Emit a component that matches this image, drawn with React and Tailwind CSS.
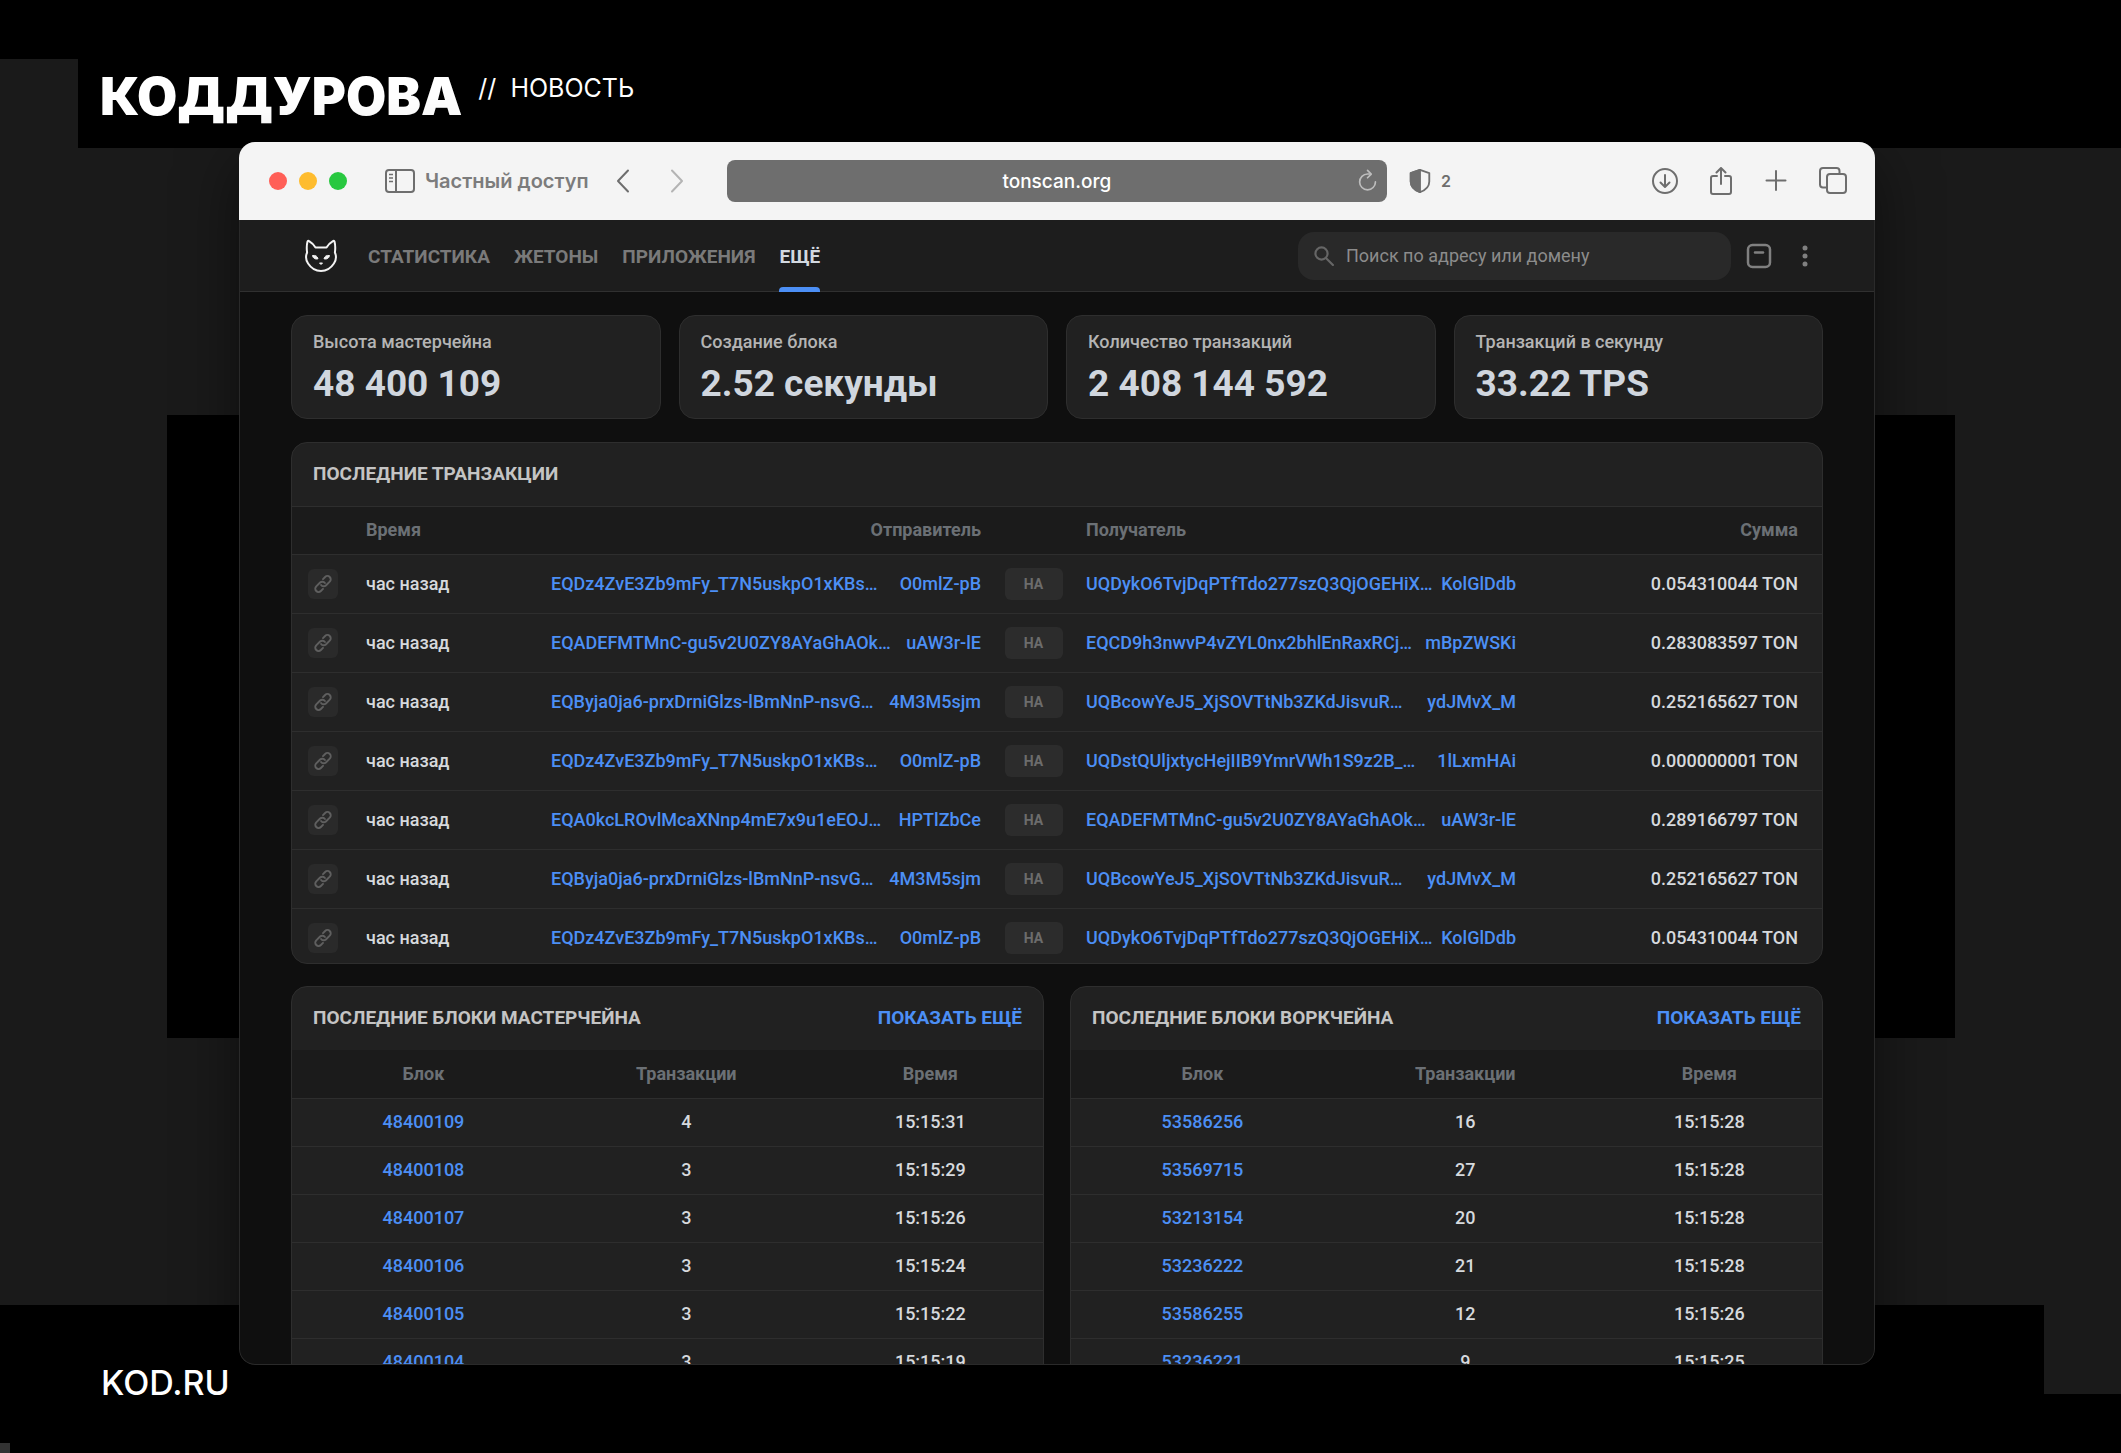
import React from 'react';

const stats = [
  { label: 'Высота мастерчейна', value: '48 400 109' },
  { label: 'Создание блока', value: '2.52 секунды' },
  { label: 'Количество транзакций', value: '2 408 144 592' },
  { label: 'Транзакций в секунду', value: '33.22 TPS' },
];

const transactions = [
  { from: ['EQDz4ZvE3Zb9mFy_T7N5uskpO1xKBs…', 'O0mlZ-pB'], to: ['UQDykO6TvjDqPTfTdo277szQ3QjOGEHiX…', 'KolGlDdb'], amount: '0.054310044 TON' },
  { from: ['EQADEFMTMnC-gu5v2U0ZY8AYaGhAOk…', 'uAW3r-lE'], to: ['EQCD9h3nwvP4vZYL0nx2bhlEnRaxRCj…', 'mBpZWSKi'], amount: '0.283083597 TON' },
  { from: ['EQByja0ja6-prxDrniGlzs-lBmNnP-nsvG…', '4M3M5sjm'], to: ['UQBcowYeJ5_XjSOVTtNb3ZKdJisvuR…', 'ydJMvX_M'], amount: '0.252165627 TON' },
  { from: ['EQDz4ZvE3Zb9mFy_T7N5uskpO1xKBs…', 'O0mlZ-pB'], to: ['UQDstQUljxtycHejIIB9YmrVWh1S9z2B_…', '1lLxmHAi'], amount: '0.000000001 TON' },
  { from: ['EQA0kcLROvlMcaXNnp4mE7x9u1eEOJ…', 'HPTlZbCe'], to: ['EQADEFMTMnC-gu5v2U0ZY8AYaGhAOk…', 'uAW3r-lE'], amount: '0.289166797 TON' },
  { from: ['EQByja0ja6-prxDrniGlzs-lBmNnP-nsvG…', '4M3M5sjm'], to: ['UQBcowYeJ5_XjSOVTtNb3ZKdJisvuR…', 'ydJMvX_M'], amount: '0.252165627 TON' },
  { from: ['EQDz4ZvE3Zb9mFy_T7N5uskpO1xKBs…', 'O0mlZ-pB'], to: ['UQDykO6TvjDqPTfTdo277szQ3QjOGEHiX…', 'KolGlDdb'], amount: '0.054310044 TON' },
];

const masterBlocks = [
  ['48400109', 4, '15:15:31'],
  ['48400108', 3, '15:15:29'],
  ['48400107', 3, '15:15:26'],
  ['48400106', 3, '15:15:24'],
  ['48400105', 3, '15:15:22'],
  ['48400104', 3, '15:15:19'],
];

const workBlocks = [
  ['53586256', 16, '15:15:28'],
  ['53569715', 27, '15:15:28'],
  ['53213154', 20, '15:15:28'],
  ['53236222', 21, '15:15:28'],
  ['53586255', 12, '15:15:26'],
  ['53236221', 9, '15:15:25'],
];

function Icon({ children, size = 28, width = 2, className = '' }) {
  return (
    <svg
      width={size}
      height={size}
      viewBox="0 0 28 28"
      fill="none"
      stroke="currentColor"
      strokeWidth={width}
      strokeLinecap="round"
      strokeLinejoin="round"
      className={className}
      aria-hidden="true"
    >
      {children}
    </svg>
  );
}

function Backdrop() {
  return (
    <svg
      className="absolute inset-0 h-full w-full"
      viewBox="0 0 2121 1453"
      preserveAspectRatio="none"
      aria-hidden="true"
    >
      <rect width="2121" height="1453" fill="#1a1a1a" />
      <rect width="2121" height="59" />
      <rect x="78" y="58" width="2043" height="90" />
      <rect x="167" y="415" width="1788" height="623" />
      <rect y="1305" width="2044" height="90" />
      <rect y="1394" width="2121" height="59" />
      <rect y="1443" width="10" height="10" fill="#333" />
    </svg>
  );
}

function Toolbar() {
  return (
    <div className="flex h-[78px] shrink-0 items-center bg-[#f4f4f4] pr-7 pl-[30px] text-[#6e6e6e]">
      <div className="flex gap-3">
        <span className="size-[18px] rounded-full bg-[#ff5f57]" />
        <span className="size-[18px] rounded-full bg-[#febc2e]" />
        <span className="size-[18px] rounded-full bg-[#28c840]" />
      </div>
      <button type="button" className="ml-[38px] flex items-center gap-2.5 text-xl font-semibold text-[#7c7c7c]">
        <svg width="30" height="24" viewBox="0 0 30 24" fill="none" stroke="#6e6e6e" strokeWidth="2" aria-hidden="true">
          <rect x="1" y="1" width="28" height="22" rx="3" />
          <path d="M11 1v22" />
          <path d="M4 5.500h4M4 9h4M4 12.500h4" strokeWidth="1.500" />
        </svg>
        Частный доступ
      </button>
      <button type="button" aria-label="Назад" className="ml-5">
        <Icon><path d="M19 3.500 9 14l10 10.500" /></Icon>
      </button>
      <button type="button" aria-label="Вперёд" className="ml-[26px] text-[#b4b4b4]">
        <Icon><path d="M9 3.500 19 14 9 24.500" /></Icon>
      </button>
      <div className="relative ml-9 h-[42px] min-w-0 flex-1">
        <input
          aria-label="Адрес сайта"
          defaultValue="tonscan.org"
          className="size-full rounded-lg bg-[#6e6e6e] text-center text-[19px] font-medium text-white outline-none"
        />
        <button type="button" aria-label="Обновить" className="absolute top-2 right-1.5 text-[#bdbdbd]">
          <Icon size={26} width={1.8}>
            <path d="M22 15a8.500 8.500 0 1 1-8.500-8.500h3" />
            <path d="m13.500 2.500 4 4-4 4" />
          </Icon>
        </button>
      </div>
      <button type="button" className="ml-5 flex items-center gap-2 text-base font-semibold">
        <Icon size={26}>
          <path d="M14 2 24 5.500v9C24 20 19.500 24 14 26 8.500 24 4 20 4 14.500v-9z" />
          <path d="M14 2v24C8.500 24 4 20 4 14.500v-9z" fill="currentColor" />
        </Icon>
        2
      </button>
      <div className="ml-[200px] flex items-center gap-7">
        <button type="button" aria-label="Загрузки">
          <Icon>
            <circle cx="14" cy="14" r="12" />
            <path d="M14 8v11.500M9.500 15.500 14 20l4.500-4.500" />
          </Icon>
        </button>
        <button type="button" aria-label="Поделиться">
          <Icon>
            <path d="M10 9H6a2 2 0 0 0-2 2v14a2 2 0 0 0 2 2h16a2 2 0 0 0 2-2V11a2 2 0 0 0-2-2h-4" />
            <path d="M14 17V1M9.500 5.500 14 1l4.500 4.500" />
          </Icon>
        </button>
        <button type="button" aria-label="Новая вкладка">
          <Icon><path d="M13 4v19M3.500 13.500h19" /></Icon>
        </button>
        <button type="button" aria-label="Все вкладки">
          <Icon>
            <rect x="8" y="7" width="19" height="19" rx="3" />
            <path d="M8 20.500H4a3 3 0 0 1-3-3V4a3 3 0 0 1 3-3h13.500a3 3 0 0 1 3 3v3" />
          </Icon>
        </button>
      </div>
    </div>
  );
}

function SiteHeader() {
  return (
    <header className="flex h-[72px] shrink-0 items-stretch border-b border-[#303030] bg-[#1d1d1d] px-[52px]">
      <a href="#" aria-label="Tonscan" className="ml-3 flex items-center">
        <svg width="36" height="36" viewBox="0 0 36 36" fill="none" stroke="#f2f2f2" strokeWidth="2" strokeLinejoin="round" aria-hidden="true">
          <path d="M3.500 3.500c.3-.8 1-.8 1.600-.3 2.600 1.600 4.800 3.600 6.400 6.300h11c1.600-2.700 3.800-4.700 6.400-6.300.6-.5 1.300-.5 1.600.3.900 3.500.9 7.500.4 11 1.700 3.800 1.200 7.700-1 11C27 30 22.500 33 17 33S7 30 4.100 25.500c-2.200-3.300-2.700-7.200-1-11-.5-3.500-.5-7.500.4-11Z" />
          <path d="M8.500 17.500c3-.5 5 .8 5.500 3.300-3 .8-5-.6-5.500-3.300ZM25.500 17.500c-3-.5-5 .8-5.500 3.300 3 .8 5-.6 5.500-3.300ZM15.500 25h3L17 26.500Z" fill="#f2f2f2" strokeWidth="1" />
        </svg>
      </a>
      <nav className="ml-7 flex gap-6 text-[19px] font-bold text-[#7a7a7a]">
        <a href="#" className="flex items-center pt-[3px]">СТАТИСТИКА</a>
        <a href="#" className="flex items-center pt-[3px]">ЖЕТОНЫ</a>
        <a href="#" className="flex items-center pt-[3px]">ПРИЛОЖЕНИЯ</a>
        <a href="#" aria-current="page" className="relative flex items-center pt-[3px] text-[#d3d9e0]">
          ЕЩЁ
          <span className="absolute inset-x-0 -bottom-px h-[5px] rounded-t bg-[#4c8ff5]" />
        </a>
      </nav>
      <div className="mr-[3px] ml-auto flex items-center gap-3">
        <label className="flex h-12 w-[433px] items-center gap-3 rounded-2xl bg-[#292929] px-4 text-[#666]">
          <Icon size={20} width={3}>
            <circle cx="10.500" cy="10.500" r="8.500" />
            <path d="m17 17 9.500 9.500" />
          </Icon>
          <input
            type="search"
            aria-label="Поиск"
            placeholder="Поиск по адресу или домену"
            className="min-w-0 flex-1 bg-transparent text-lg outline-none placeholder:text-[#8c8c8c]"
          />
        </label>
        <button type="button" aria-label="Кошелёк" className="ml-0.5 text-[#808080]">
          <Icon width={2.5}>
            <rect x="3" y="3" width="22" height="22" rx="4.500" />
            <path d="M10 10.500h8" />
          </Icon>
        </button>
        <button type="button" aria-label="Меню" className="ml-1.5 text-[#808080]">
          <svg width="28" height="28" viewBox="0 0 28 28" fill="currentColor" aria-hidden="true">
            <circle cx="14" cy="6" r="2.500" />
            <circle cx="14" cy="14" r="2.500" />
            <circle cx="14" cy="22" r="2.500" />
          </svg>
        </button>
      </div>
    </header>
  );
}

function Address({ parts }) {
  return (
    <a href="#" className="flex w-[430px] justify-between text-[#4c8ff5]">
      <span>{parts[0]}</span>
      <span>{parts[1]}</span>
    </a>
  );
}

function Transactions() {
  return (
    <section className="mt-[23px] h-[522px] shrink-0 overflow-hidden rounded-2xl border border-[#2e2e2e] bg-[#212121]">
      <h2 className="flex h-16 items-center border-b border-[#2e2e2e] px-[21px] text-[19px] font-bold text-[#c4c4c4]">
        ПОСЛЕДНИЕ ТРАНЗАКЦИИ
      </h2>
      <table className="w-full text-lg font-medium text-[#d6d9dd]">
        <thead className="bg-[#1b1b1b] text-[#6b7075]">
          <tr className="h-[47px] border-b border-[#2e2e2e]">
            <th className="w-[74px]" aria-label="Ссылка" />
            <th className="text-left font-bold">Время</th>
            <th className="w-[430px] text-right font-bold">Отправитель</th>
            <th className="w-[105px]" aria-label="Направление" />
            <th className="w-[430px] text-left font-bold">Получатель</th>
            <th className="w-[306px] pr-6 text-right font-bold">Сумма</th>
          </tr>
        </thead>
        <tbody>
          {transactions.map((tx, i) => (
            <tr key={i} className="h-[59px] border-b border-[#2e2e2e]">
              <td className="pl-4">
                <a href="#" aria-label="Открыть транзакцию" className="flex size-[30px] items-center justify-center rounded-md bg-[#2a2a2a] text-[#5f5f5f]">
                  <Icon size={18} width={3}>
                    <path d="M11 15.500a5 5 0 0 0 7.500.8l6-6a5 5 0 0 0-7.200-7.200L14 6.500" />
                    <path d="M17 12.500a5 5 0 0 0-7.500-.8l-6 6a5 5 0 0 0 7.200 7.200L14 21.500" />
                  </Icon>
                </a>
              </td>
              <td>час назад</td>
              <td><Address parts={tx.from} /></td>
              <td>
                <span className="mx-auto flex h-8 w-[58px] items-center justify-center rounded-md bg-[#2c2c2c] text-sm font-bold text-[#6c6c6c]">
                  НА
                </span>
              </td>
              <td><Address parts={tx.to} /></td>
              <td className="pr-6 text-right">{tx.amount}</td>
            </tr>
          ))}
        </tbody>
      </table>
    </section>
  );
}

function Blocks({ title, rows }) {
  return (
    <section className="rounded-t-2xl border border-[#2e2e2e] bg-[#212121]">
      <div className="flex h-[63px] items-center justify-between px-[21px] text-[19px] font-bold">
        <h2 className="text-[#c4c4c4]">{title}</h2>
        <a href="#" className="text-[#4c8ff5]">ПОКАЗАТЬ ЕЩЁ</a>
      </div>
      <table className="w-full table-fixed text-center text-lg font-medium text-[#d6d9dd]">
        <thead className="bg-[#1b1b1b] text-[#6b7075]">
          <tr className="h-12 border-b border-[#2e2e2e]">
            <th className="w-[35%] font-bold">Блок</th>
            <th className="w-[35%] font-bold">Транзакции</th>
            <th className="w-[30%] font-bold">Время</th>
          </tr>
        </thead>
        <tbody>
          {rows.map(([block, count, time]) => (
            <tr key={block} className="h-12 border-b border-[#2e2e2e]">
              <td><a href="#" className="text-[#4c8ff5]">{block}</a></td>
              <td>{count}</td>
              <td>{time}</td>
            </tr>
          ))}
        </tbody>
      </table>
    </section>
  );
}

export default function App() {
  return (
    <div className="relative flex h-screen flex-col overflow-hidden bg-black font-['Inter',sans-serif] text-white">
      <Backdrop />
      <div className="relative flex h-[142px] shrink-0 items-start gap-4 pt-[67px] pl-[100px]">
        <span className="text-[52px] leading-[60px] font-black">КОДДУРОВА</span>
        <span className="flex gap-3.5 pt-[3px] text-[25px] leading-9">
          <span>//</span>
          <span>НОВОСТЬ</span>
        </span>
      </div>

      <div className="relative mr-[246px] ml-[239px] flex min-h-0 flex-1 flex-col overflow-hidden rounded-2xl bg-[#0f0f0f] shadow-[0_20px_60px_rgba(0,0,0,0.5)]">
        <Toolbar />
        <div className="flex min-h-0 flex-1 flex-col overflow-hidden rounded-b-2xl border border-t-0 border-[#2a2a2a] font-['Roboto',sans-serif]">
          <SiteHeader />
          <main className="flex min-h-0 flex-1 flex-col overflow-hidden px-[51px] pt-[23px]">
            <div className="grid shrink-0 grid-cols-4 gap-[18px]">
              {stats.map((s) => (
                <div key={s.label} className="h-[104px] rounded-2xl border border-[#2e2e2e] bg-[#212121] px-[21px] pt-3">
                  <div className="text-lg leading-7 font-medium text-[#b4b4b4]">{s.label}</div>
                  <div className="mt-1.5 text-[37px] leading-[44px] font-bold text-[#d0d6de]">{s.value}</div>
                </div>
              ))}
            </div>
            <Transactions />
            <div className="mt-[22px] grid grid-cols-2 gap-[26px]">
              <Blocks title="ПОСЛЕДНИЕ БЛОКИ МАСТЕРЧЕЙНА" rows={masterBlocks} />
              <Blocks title="ПОСЛЕДНИЕ БЛОКИ ВОРКЧЕЙНА" rows={workBlocks} />
            </div>
          </main>
        </div>
      </div>

      <footer className="relative h-[88px] shrink-0 pl-[101px] text-[34px] leading-9 font-medium">KOD.RU</footer>
    </div>
  );
}
